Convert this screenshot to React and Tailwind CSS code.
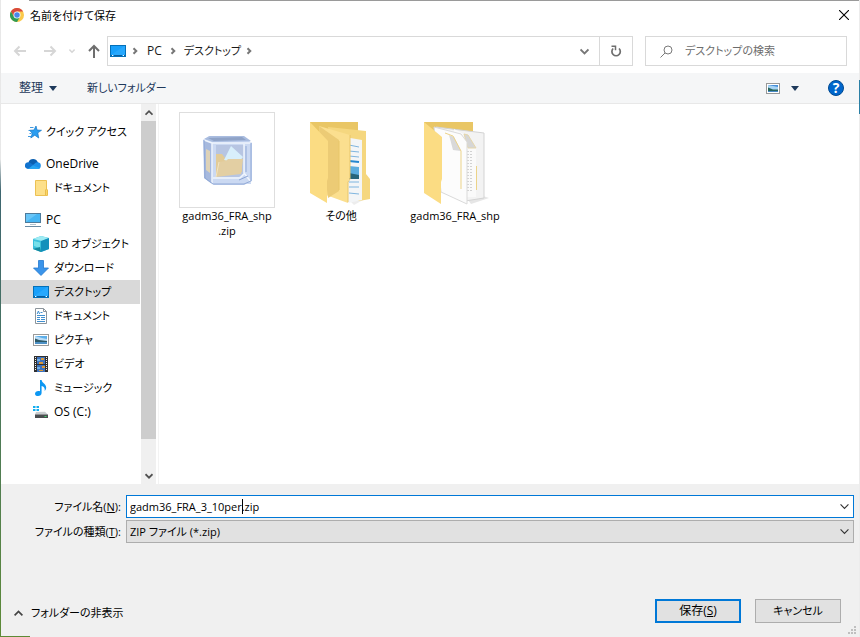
import React, { useState } from "react";

const ChromeLogo = () => (
  <svg width="14" height="14" viewBox="0 0 48 48" aria-hidden="true">
    <circle cx="24" cy="24" r="24" fill="#fbc94a" />
    <path d="M24 12h20.8A24 24 0 0 0 3.2 12L14 30Z" fill="#d9493d" />
    <path d="M3.2 12A24 24 0 0 0 24 48L34.4 30 13.6 30Z" fill="#2f9b55" />
    <circle cx="24" cy="24" r="12" fill="#fff" />
    <circle cx="24" cy="24" r="9.5" fill="#4a86e8" />
  </svg>
);

const Chevron = ({ d, className, size = 8, width = 2 }) => (
  <svg width={size} height={size} viewBox="0 0 8 8" fill="none" stroke="currentColor" strokeWidth={width} className={className} aria-hidden="true">
    <path d={d} />
  </svg>
);

const DOWN = "M0.5 2.2 4 5.7 7.5 2.2";
const UP = "M0.5 5.7 4 2.2 7.5 5.7";
const RIGHT = "M2.5 1.2 5.3 4 2.5 6.8";

const Caret = () => (
  <svg width="8" height="5" viewBox="0 0 8 5" aria-hidden="true">
    <path d="M0 0h8L4 5Z" fill="#1e395b" />
  </svg>
);

const Arrow = ({ d }) => (
  <svg width="14" height="14" viewBox="0 0 14 14" fill="none" stroke="currentColor" strokeWidth="2" aria-hidden="true">
    <path d={d} />
  </svg>
);

const DesktopIcon = () => (
  <svg width="16" height="16" viewBox="0 0 16 16" aria-hidden="true">
    <rect x="0.5" y="2.5" width="15" height="11" fill="#18a0fb" stroke="#0470b8" />
    <path d="M1 12 14 3h1v10H1Z" fill="#35b0ff" opacity=".5" />
    <path d="M1 12.5h2M4 12.5h8M13 12.5h2" stroke="#0a5c9c" />
    <path d="M2 12.5h1M13 12.5h1" stroke="#fff" />
  </svg>
);

const StarIcon = () => (
  <svg width="16" height="16" viewBox="0 0 16 16" aria-hidden="true">
    <path d="m10 2 1 4 4.500.300-3.700 2.500L12.700 14l-3.900-2.800L4.800 14l1.500-4.700L3.500 6.300 8 6Z" fill="#2a9df0" stroke="#1377c9" strokeWidth=".7" />
    <path d="M4 3.500h3.500M2.500 6.500h2M3.500 9.500h2M2 12.500h3" stroke="#2b8fdd" strokeWidth=".9" />
  </svg>
);

const OneDriveIcon = () => (
  <svg width="16" height="16" viewBox="0 0 16 16" aria-hidden="true">
    <path d="M3.5 6.2A5 5 0 0 1 12.7 6L14 9 5 10Z" fill="#0b5fb0" />
    <path d="M3 13a3.4 3.4 0 1 1 1.8-6.4L13 12Z" fill="#1273ce" />
    <path d="m8 9 3-2.4a4 4 0 0 1 2-.3 3.4 3.4 0 0 1 0 6.7H3Z" fill="#1d90ea" />
    <path d="m3 13 5-3.4 7 2.4-1.5 1Z" fill="#26a5f2" />
  </svg>
);

const FolderIcon = () => (
  <svg width="16" height="16" viewBox="0 0 16 16" aria-hidden="true">
    <path d="M2.5.5h11v9l1 1v5h-12Z" fill="#fde08a" stroke="#ecc153" />
    <path d="M12.5 15v-5l1-1 1 1v5" fill="#fbd667" stroke="#e9bd4d" />
  </svg>
);

const PcIcon = () => (
  <svg width="16" height="16" viewBox="0 0 16 16" aria-hidden="true">
    <rect x=".5" y="1.5" width="15" height="9" fill="#46b5f3" stroke="#4d7b9b" />
    <path d="M1 10V2h11Z" fill="#7fd0fa" opacity=".6" />
    <path d="M5 12.5h6" stroke="#b2c3cf" />
    <path d="M0 14.5h16" stroke="#6a8ba3" />
  </svg>
);

const CubeIcon = () => (
  <svg width="16" height="16" viewBox="0 0 16 16" aria-hidden="true">
    <path d="m0 3 8-3 8 2v11l-8 3-8-3Z" fill="#3cc0dc" />
    <path d="m0 3 8-3 8 2-7 3Z" fill="#9eebf3" />
    <path d="M8 5v11l8-3V2Z" fill="#1490bb" />
    <path d="m1 5 6 1.600v5.600L1 10Z" fill="#77e0ea" />
    <path d="m0 13 7-2 1 5Z" fill="#13899f" />
  </svg>
);

const DownloadIcon = () => (
  <svg width="16" height="16" viewBox="0 0 16 16" aria-hidden="true">
    <path d="M5.5.5h5v7.500h5L8 15.5.5 8h5Z" fill="#3a94ea" stroke="#2379cf" strokeWidth=".8" />
  </svg>
);

const DocumentIcon = () => (
  <svg width="16" height="16" viewBox="0 0 16 16" aria-hidden="true">
    <path d="M2.5.5h8l3 3v12h-11Z" fill="#fff" stroke="#8c959c" />
    <path d="M10.5.5v3h3" fill="none" stroke="#8c959c" />
    <path d="m4.2 6 1.2-3 1.2 3M7.5 4.5h2M4 7.5h8M4 9.5h3M8 9.5h4M4 11.5h3M8 11.5h4M4 13.5h8" stroke="#3f8fd0" fill="none" />
  </svg>
);

const PictureIcon = () => (
  <svg width="16" height="16" viewBox="0 0 16 16" aria-hidden="true">
    <rect x=".5" y="2.5" width="15" height="11" fill="#fff" stroke="#9a9a9a" />
    <path d="M2 4h12v8H2Z" fill="#b9dcf6" />
    <path d="M2 4h12v3l-5-1Z" fill="#5caee9" />
    <path d="M2 6.5 6 8l8 1v1.5H2Z" fill="#2d5968" />
    <path d="M2 10h12v2H2Z" fill="#4d91c6" />
  </svg>
);

const VideoIcon = () => (
  <svg width="16" height="16" viewBox="0 0 16 16" aria-hidden="true">
    <path d="M1 0h14v16H1Z" fill="#303030" />
    <path d="M4 1h8v7H4ZM4 9h8v7H4Z" fill="#3d72bd" />
    <path d="M8 2h3v2H8ZM6 6h4v2H6ZM9 10h3v2H9ZM6 14h4v1H6Z" fill="#d9983a" />
    <path d="M4 3h3v2H4ZM4 11h3v2H4Z" fill="#6fb0e8" />
    <path d="M2.500 1v14M13.500 1v14" stroke="#f2f2f2" strokeDasharray="1 1" />
  </svg>
);

const MusicIcon = () => (
  <svg width="16" height="16" viewBox="0 0 16 16" aria-hidden="true">
    <path d="M7 0h1.600c.3 3 4.600 3.800 4.600 7.500 0 1.500-.7 2.700-1.500 3.500.5-3-1-4.500-3.100-5V13c0 1.700-1.600 3-3.500 3S2 15.200 2 13.700 3.500 11 5.300 11c.7 0 1.300.1 1.700.3Z" fill="#0d97f2" />
  </svg>
);

const DriveIcon = () => (
  <svg width="16" height="16" viewBox="0 0 16 16" aria-hidden="true">
    <path d="M0 2h2.500v2H0ZM3.500 2H6v2H3.500ZM0 5h2.500v2H0ZM3.500 5H6v2H3.500Z" fill="#13adef" />
    <path d="m3 8 9-.2 3 3H2Z" fill="#c9cdcf" />
    <path d="M2 10.500h13v3.500H2Z" fill="#4a4d4f" />
    <path d="M11.500 12.500h2" stroke="#3fd46a" />
  </svg>
);

const ZipCube = () => (
  <svg width="94" height="94" viewBox="0 0 94 94" aria-hidden="true">
    <path d="m23 27 6-4 35 1 8 6v38l-8 4H34l-10-7Z" fill="#c3d3f0" />
    <path d="m24 26 6-3h34l7 5-38 1Z" fill="#a9bcdf" />
    <path d="m28 25 34-1 4 3-32 1Z" fill="#7f92b8" opacity=".6" />
    <path d="m24 27 8 3v41l-8-6Z" fill="#a6b9de" />
    <path d="m26 36 4 2v22l-4-3Z" fill="#ddd2b8" />
    <path d="M33 30h38v41H33Z" fill="#cbd9f2" />
    <path d="M36 32h28v28l-5 4H36Z" fill="#b7c5e2" />
    <path d="M36 41h6l3 4h17v14l-26 4Z" fill="#e2cb97" />
    <path d="m51 33 12 11-5 6-14-3Z" fill="#d8effb" />
    <path d="m36 64 3-15 7-1 2-2h15l-2 15Z" fill="#e3cfa3" />
    <path d="m36 64 3-15" stroke="#f3e4c0" />
    <path d="m24 27 8 3v41M32 30h39M64 31v29l7 9M33 65h27l4-4" fill="none" stroke="#eff5fd" strokeWidth="1.500" />
    <path d="m24 27 1 38 8 6h31l7-3V30M66 33v26" fill="none" stroke="#91a9d6" />
    <path d="m59 67 9-4" stroke="#8ba5d6" />
  </svg>
);

const OtherFolder = () => (
  <svg width="96" height="96" viewBox="0 -1 96 96" aria-hidden="true">
    <path d="m58 89 9-4 3 2-9 5Z" fill="#ededed" />
    <path d="M17 9h48v20H17Z" fill="#e9c665" />
    <path d="m35 14 38 4v43l4 5v20l-11 2-20-6Z" fill="#f5d77f" />
    <path d="m40 22 29 5v60l-14 3Z" fill="#f3f5f7" />
    <path d="M56 32l10 2M56 38l10 1M56 43l10 1M56 69h10M56 74h10M56 80l10 1" stroke="#7fb5df" />
    <path d="m56 48 10 1" stroke="#2487cf" strokeWidth="2" />
    <path d="m56 53 10 1v12H56Z" fill="#5badde" />
    <path d="m56 60 10 2v4H56Z" fill="#27667b" />
    <path d="m26 13 31 9v43l-2 3v22l-22-8Z" fill="#fbdf8f" />
    <path d="m26 13 20 14v51l-11 7Z" fill="#eccb75" />
    <path d="m17 9 18 19v37l-1 3v22L17 80Z" fill="#fbdc83" />
    <path d="M46 28v49M57 22v44l-2 3v20" fill="none" stroke="#e9c66a" />
  </svg>
);

const DocsFolder = () => (
  <svg width="96" height="96" viewBox="-1 -1 96 96" aria-hidden="true">
    <path d="m60 87 15-4 6 2-18 6Z" fill="#e6e6e6" />
    <path d="M16 9h49v25H16Z" fill="#e9c665" />
    <path d="m28 14 48 6v65l-19 3-20-14Z" fill="#f3f3f3" stroke="#d3d3d3" />
    <path d="m46 16 12 6 10 13v49H45Z" fill="#fafafa" />
    <path d="m56 21 4 1 8 13h-8Z" fill="#d6d6d6" stroke="#e5d6ab" />
    <path d="M60 38v42M63 38v42" stroke="#d2d2d2" strokeDasharray="1 2" strokeWidth="2" />
    <path d="M68.500 53v24" stroke="#ecd388" />
    <path d="m26 14 27 7 6 8v62L33 79Z" fill="#fcfcfc" stroke="#dadada" />
    <path d="m41 22 5 2 7 14-8-1Z" fill="#d9d9d9" />
    <path d="m37 20 8 3 8 15v38" fill="none" stroke="#ecd388" />
    <path d="m16 9 18 15v42l-1 3v22L16 80Z" fill="#fbdc83" />
  </svg>
);

const tree = [
  { label: "クイック アクセス", Icon: StarIcon, root: true },
  { label: "OneDrive", Icon: OneDriveIcon, root: true, gap: true, latin: true },
  { label: "ドキュメント", Icon: FolderIcon },
  { label: "PC", Icon: PcIcon, root: true, gap: true, latin: true },
  { label: "3D オブジェクト", Icon: CubeIcon },
  { label: "ダウンロード", Icon: DownloadIcon },
  { label: "デスクトップ", Icon: DesktopIcon, selected: true },
  { label: "ドキュメント", Icon: DocumentIcon },
  { label: "ピクチャ", Icon: PictureIcon },
  { label: "ビデオ", Icon: VideoIcon },
  { label: "ミュージック", Icon: MusicIcon },
  { label: "OS (C:)", Icon: DriveIcon, latin: true },
];

const files = [
  { name: "gadm36_FRA_shp", ext: ".zip", Icon: ZipCube, framed: true },
  { name: "その他", Icon: OtherFolder },
  { name: "gadm36_FRA_shp", Icon: DocsFolder },
];

const App = () => {
  const [fileName, setFileName] = useState("gadm36_FRA_3_10per.zip");
  const [search, setSearch] = useState("");

  return (
    <div className="relative flex min-h-screen bg-white font-['Open_Sans','Noto_Sans_CJK_JP',sans-serif] text-[11px] leading-4 text-black [font-feature-settings:'palt']">
      {/* Desktop showing at the window's edge */}
      <div className="w-px shrink-0 bg-linear-to-b from-[#e8e8e8] from-25% via-[#3e6670] via-30% to-[#5d8a35]"></div>

      <div className="flex min-w-0 flex-1 flex-col">
        <div className="ml-7 h-px bg-[#9a9a9a]"></div>

        {/* Title bar */}
        <header className="flex h-7 items-center gap-[6px] pl-[9px] pr-[9px]">
          <ChromeLogo />
          <h1 className="flex-1 pt-px">名前を付けて保存</h1>
          <button aria-label="閉じる" className="p-px">
            <svg width="10" height="10" viewBox="0 0 10 10" stroke="#000" strokeWidth="1.100">
              <path d="m0 0 10 10M10 0 0 10" />
            </svg>
          </button>
        </header>

        {/* Navigation */}
        <nav className="flex h-11 items-center pl-3 pr-3">
          <button aria-label="戻る" className="mr-4 text-[#d6d6d6]">
            <Arrow d="M13 7H2M6.500 2.500 2 7l4.500 4.500" />
          </button>
          <button aria-label="進む" className="mr-3 text-[#d6d6d6]">
            <Arrow d="M1 7h11M7.500 2.500 12 7l-4.500 4.500" />
          </button>
          <button aria-label="履歴" className="mr-3 text-[#d6d6d6]">
            <Chevron d={DOWN} size={6} />
          </button>
          <button aria-label="上へ" className="mr-[6px] text-[#6e6e6e]">
            <Arrow d="M7 14V2M2 7l5-5 5 5" />
          </button>
          <div className="flex h-[30px] flex-1 items-center border border-[#d9d9d9] pl-[2px] text-[#1a1a1a]">
            <DesktopIcon />
            <Chevron d={RIGHT} className="ml-[5px] mr-2 text-[#777]" />
            <button className="text-[12px]">PC</button>
            <Chevron d={RIGHT} className="mx-[7px] text-[#777]" />
            <button>デスクトップ</button>
            <Chevron d={RIGHT} className="ml-1 text-[#777]" />
            <button aria-label="以前の場所" className="ml-auto flex h-full w-[31px] items-center justify-center border-r border-[#d9d9d9] text-[#777]">
              <Chevron d={DOWN} size={9} width={1.6} />
            </button>
            <button aria-label="更新" className="flex h-full w-8 items-center justify-center">
              <svg width="12" height="12" viewBox="0 0 12 12" fill="none" stroke="#6e6e6e" strokeWidth="1.700">
                <path d="M3.200 3.500A4.200 4.200 0 1 0 9 3.500" />
                <path d="M1.500 1.200h4v4" strokeWidth="1.500" />
              </svg>
            </button>
          </div>
          <div className="ml-3 flex h-[30px] w-[202px] items-center border border-[#d9d9d9] pl-[14px]">
            <svg width="13" height="13" viewBox="0 0 13 13" fill="none" stroke="#7a7a7a" className="shrink-0" aria-hidden="true">
              <circle cx="8" cy="5" r="4" />
              <path d="m5 8-4.500 4.500" />
            </svg>
            <input
              type="text"
              value={search}
              onChange={(e) => setSearch(e.target.value)}
              aria-label="デスクトップの検索"
              placeholder="デスクトップの検索"
              className="ml-3 w-full min-w-0 outline-none placeholder:text-[#6d6d6d]"
            />
          </div>
        </nav>

        {/* Toolbar */}
        <div className="flex h-[31px] items-center border-b border-[#e8e8e8] bg-[#f5f6f7] pl-[18px] pr-[15px] text-[#1e395b]">
          <button className="mr-[30px] flex items-center gap-[6px] text-[12px]">
            整理 <Caret />
          </button>
          <button className="flex-1 text-left">新しいフォルダー</button>
          <button aria-label="表示方法の変更" className="flex items-center gap-[11px]">
            <svg width="14" height="11" viewBox="0 0 14 11" aria-hidden="true">
              <rect x=".5" y=".5" width="13" height="10" fill="#fff" stroke="#999" />
              <path d="M2 2h10v7H2Z" fill="#a8d4f5" />
              <path d="M2 2h10v2L7 3Z" fill="#468fda" />
              <path d="m2 4.500 5 2h5V8H2Z" fill="#28665d" />
              <path d="M2 8h10v1H2Z" fill="#4a8bc9" />
            </svg>
            <Caret />
          </button>
          <button aria-label="ヘルプ" className="ml-[29px] flex h-4 w-4 items-center justify-center rounded-full border border-[#004a91] bg-[#0066cc] text-[14px] font-bold leading-none text-white">
            ?
          </button>
        </div>

        {/* Tree and files */}
        <main className="flex h-[380px]">
          <ul className="w-[139px] pt-4">
            {tree.map(({ label, Icon, root, gap, selected, latin }, index) => (
              <li key={index} className={gap ? "mt-2" : ""}>
                <button
                  className={`flex h-6 w-full items-center whitespace-nowrap ${index === 0 ? "gap-1 pl-[25px]" : root ? "gap-[5px] pl-6" : "gap-[5px] pl-8"} ${
                    selected ? "bg-[#d9d9d9]" : ""
                  } ${latin ? "text-[12px]" : ""}`}
                >
                  <Icon />
                  {label}
                </button>
              </li>
            ))}
          </ul>
          <div className="ml-px flex w-[15px] flex-col bg-[#f0f0f0] text-[#505050]">
            <button aria-label="上にスクロール" className="flex h-[17px] items-center justify-center">
              <Chevron d={UP} width={1.8} />
            </button>
            <div className="h-[318px] bg-[#cdcdcd]"></div>
            <button aria-label="下にスクロール" className="mt-auto flex h-[17px] items-center justify-center">
              <Chevron d={DOWN} width={1.8} />
            </button>
          </div>
          <ul className="ml-[2px] flex flex-1 gap-[14px] border-l border-[#f3f3f3] pl-[18px] pt-2">
            {files.map(({ name, ext, Icon, framed }, index) => (
              <li key={index} className="w-[100px]">
                <button className="flex w-full flex-col items-center">
                  <span className={`flex h-24 w-24 items-center justify-center ${framed ? "border border-[#dedede]" : ""}`}>
                    <Icon />
                  </span>
                  <span className="w-full leading-[15px]">
                    {name}
                    <wbr />
                    {ext}
                  </span>
                </button>
              </li>
            ))}
          </ul>
        </main>

        {/* Name and type */}
        <footer className="flex flex-1 flex-col bg-[#f0f0f0] pt-[11px]">
          <div className="grid grid-cols-[120px_1fr] gap-x-[5px] gap-y-[2px] pr-[5px]">
            <label htmlFor="file-name" className="self-center text-right">
              ファイル名(<u>N</u>):
            </label>
            <div className="flex h-[23px] items-center border border-[#0078d7] bg-white pr-1">
              <div className="relative flex flex-1">
                <input
                  id="file-name"
                  type="text"
                  value={fileName}
                  onChange={(e) => setFileName(e.target.value)}
                  className="w-full pl-[3px] outline-none"
                />
                <span className="absolute left-[115px] top-0 h-[15px] w-px bg-black"></span>
              </div>
              <Chevron d={DOWN} size={9} width={1} className="text-[#333]" />
            </div>
            <label htmlFor="file-type" className="self-center text-right">
              ファイルの種類(<u>T</u>):
            </label>
            <div className="relative">
              <select id="file-type" className="h-[23px] w-full appearance-none border border-[#adadad] bg-[#e1e1e1] pl-[3px]">
                <option>ZIP ファイル (*.zip)</option>
              </select>
              <Chevron d={DOWN} size={9} width={1} className="pointer-events-none absolute right-[5px] top-[7px] text-[#333]" />
            </div>
          </div>

          <div className="mt-auto flex items-center pb-[13px] pl-[13px] pr-[18px]">
            <button className="flex flex-1 items-center gap-2 pt-1">
              <Chevron d={UP} size={9} width={1.6} className="text-[#444]" />
              フォルダーの非表示
            </button>
            <button className="mr-[14px] h-6 w-[86px] border-2 border-[#0078d7] bg-[#e1e1e1] text-[12px]">
              保存(<u>S</u>)
            </button>
            <button className="h-6 w-[86px] border border-[#adadad] bg-[#e1e1e1]">キャンセル</button>
          </div>
          <div className="h-px w-[29px] bg-[#5d8a35]"></div>
        </footer>
      </div>

      <div className="w-px shrink-0 bg-[#ececec] pt-20">
        <div className="h-[34px] bg-[#2a7fa5]"></div>
      </div>

      {/* Resize grip */}
      <svg width="9" height="9" viewBox="0 0 9 9" fill="#bfbfbf" className="absolute bottom-[2px] right-[3px]" aria-hidden="true">
        <path d="M6 0h2v2H6ZM3 3h2v2H3ZM6 3h2v2H6ZM0 6h2v2H0ZM3 6h2v2H3ZM6 6h2v2H6Z" />
      </svg>
    </div>
  );
};

export default App;
